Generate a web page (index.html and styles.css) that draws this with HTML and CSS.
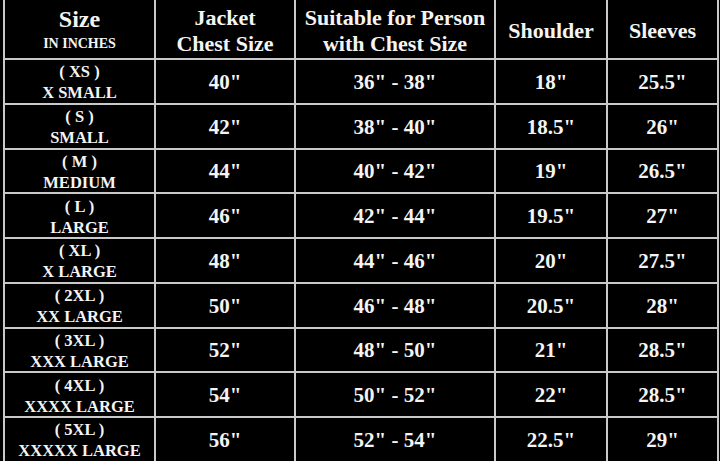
FILE: index.html
```html
<!DOCTYPE html>
<html>
<head>
<meta charset="utf-8">
<link rel="stylesheet" href="styles.css">
</head>
<body>
<div class="chart">
  <div class="cell head"><div class="big size">Size</div><div class="small">IN INCHES</div></div>
  <div class="cell head"><div class="big">Jacket</div><div class="big">Chest Size</div></div>
  <div class="cell head"><div class="big">Suitable for Person</div><div class="big">with Chest Size</div></div>
  <div class="cell head"><div class="big">Shoulder</div></div>
  <div class="cell head"><div class="big">Sleeves</div></div>

  <div class="cell sz"><div>( XS )</div><div>X SMALL</div></div>
  <div class="cell num">40"</div><div class="cell num">36" - 38"</div><div class="cell num">18"</div><div class="cell num">25.5"</div>

  <div class="cell sz"><div>( S )</div><div>SMALL</div></div>
  <div class="cell num">42"</div><div class="cell num">38" - 40"</div><div class="cell num">18.5"</div><div class="cell num">26"</div>

  <div class="cell sz"><div>( M )</div><div>MEDIUM</div></div>
  <div class="cell num">44"</div><div class="cell num">40" - 42"</div><div class="cell num">19"</div><div class="cell num">26.5"</div>

  <div class="cell sz"><div>( L )</div><div>LARGE</div></div>
  <div class="cell num">46"</div><div class="cell num">42" - 44"</div><div class="cell num">19.5"</div><div class="cell num">27"</div>

  <div class="cell sz"><div>( XL )</div><div>X LARGE</div></div>
  <div class="cell num">48"</div><div class="cell num">44" - 46"</div><div class="cell num">20"</div><div class="cell num">27.5"</div>

  <div class="cell sz"><div>( 2XL )</div><div>XX LARGE</div></div>
  <div class="cell num">50"</div><div class="cell num">46" - 48"</div><div class="cell num">20.5"</div><div class="cell num">28"</div>

  <div class="cell sz"><div>( 3XL )</div><div>XXX LARGE</div></div>
  <div class="cell num">52"</div><div class="cell num">48" - 50"</div><div class="cell num">21"</div><div class="cell num">28.5"</div>

  <div class="cell sz"><div>( 4XL )</div><div>XXXX LARGE</div></div>
  <div class="cell num">54"</div><div class="cell num">50" - 52"</div><div class="cell num">22"</div><div class="cell num">28.5"</div>

  <div class="cell sz"><div>( 5XL )</div><div>XXXXX LARGE</div></div>
  <div class="cell num">56"</div><div class="cell num">52" - 54"</div><div class="cell num">22.5"</div><div class="cell num">29"</div>
</div>
</body>
</html>
```

FILE: styles.css
```css
html, body {
  margin: 0;
  padding: 0;
  background: #000;
  height: 100%;
  overflow: hidden;
}
body {
  font-family: "Liberation Serif", "DejaVu Serif", serif;
  font-weight: bold;
  color: #f4f4f4;
}
.chart {
  margin-left: 3px;
  width: 716px;
  border-left: 2px solid #c9c9c9;
  display: grid;
  grid-template-columns: 151px 140px 200px 112px 111px;
  grid-template-rows: 60px;
  grid-auto-rows: 44.75px;
}
.cell {
  box-sizing: border-box;
  border-right: 2px solid #c9c9c9;
  border-bottom: 2px solid #c9c9c9;
  display: flex;
  flex-direction: column;
  align-items: center;
  justify-content: center;
  text-align: center;
  white-space: nowrap;
}
.head {
  padding-top: 3px;
}
.head .big {
  font-size: 22px;
  line-height: 26px;
}
.head .big.size {
  font-size: 24px;
  line-height: 26px;
}
.head .small {
  font-size: 14px;
  line-height: 24px;
}
.sz {
  font-size: 16.5px;
  line-height: 21px;
  padding-top: 2px;
}
.num {
  font-size: 21px;
  padding-top: 2px;
}
```
